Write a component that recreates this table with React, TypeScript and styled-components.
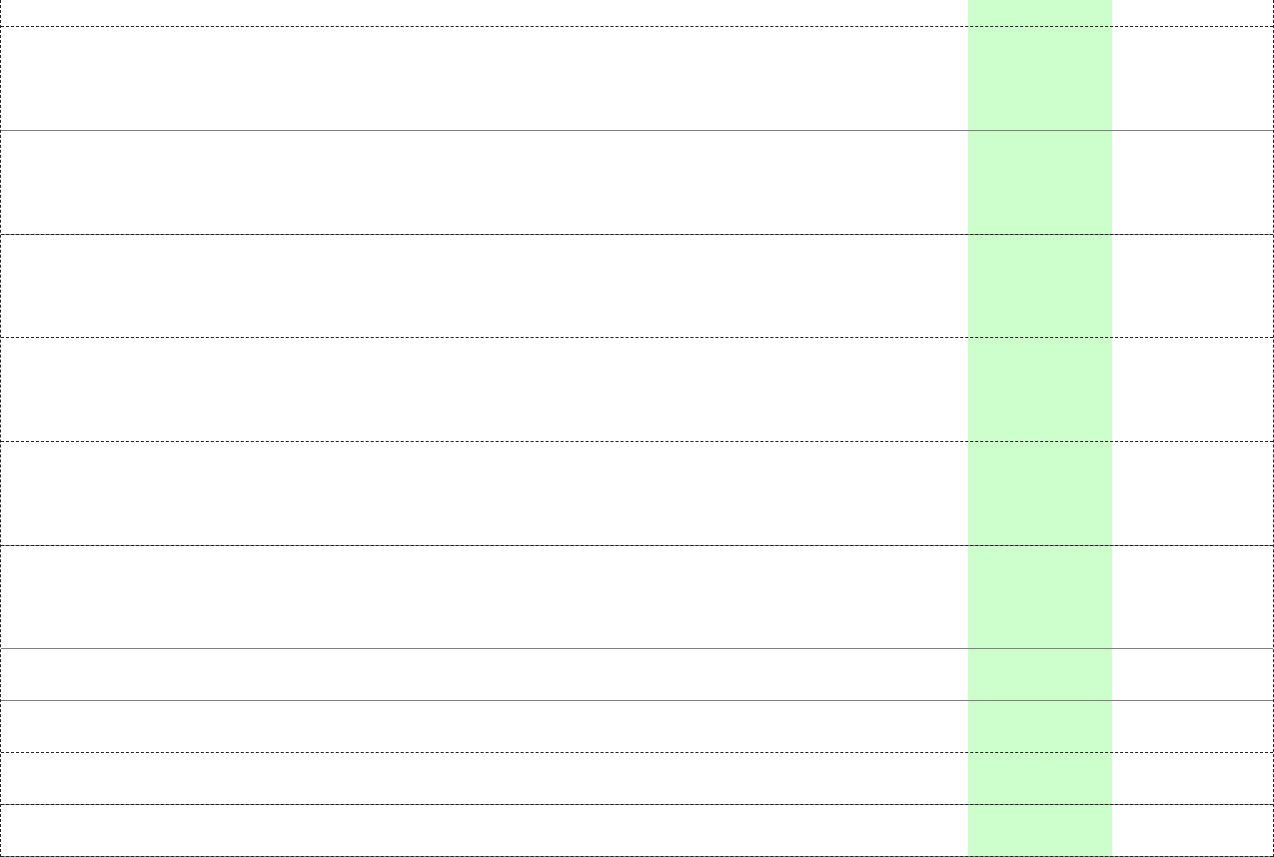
import { Fragment } from "react";
import styled, { createGlobalStyle } from "styled-components";

const GlobalStyle = createGlobalStyle`
  html, body {
    margin: 0;
    padding: 0;
    background: #fff;
    font-family: "Liberation Sans", Arial, sans-serif;
    overflow: hidden;
  }
`;

type RuleKind = "dashed" | "solid" | "both";

const Sheet = styled.div`
  display: flex;
  flex-direction: column;
  width: 1274px;
  height: 857px;
  box-sizing: border-box;
  border-left: 1px dashed #222;
  border-right: 1px dashed #222;
  background: linear-gradient(
    to right,
    transparent 967px,
    #ccffcc 967px,
    #ccffcc 1111px,
    transparent 1111px
  );
`;

const Band = styled.div<{ $h: number }>`
  height: ${(p) => p.$h}px;
  flex: none;
`;

const Rule = styled.div<{ $kind: RuleKind }>`
  flex: none;
  height: ${(p) => (p.$kind === "solid" ? "1px" : "0")};
  background: ${(p) => (p.$kind === "dashed" ? "transparent" : "#808080")};
  border-top: ${(p) => (p.$kind === "solid" ? "none" : "1px dashed #222")};
`;

// band height above each rule, and what the rule looks like
const rows: { h: number; kind: RuleKind }[] = [
  { h: 26, kind: "dashed" },
  { h: 103, kind: "solid" },
  { h: 103, kind: "both" },
  { h: 102, kind: "dashed" },
  { h: 103, kind: "dashed" },
  { h: 103, kind: "both" },
  { h: 102, kind: "solid" },
  { h: 51, kind: "solid" },
  { h: 51, kind: "dashed" },
  { h: 51, kind: "both" },
  { h: 51, kind: "both" },
];

export default function App() {
  return (
    <>
      <GlobalStyle />
      <Sheet>
        {rows.map((r, i) => (
          <Fragment key={i}>
            <Band $h={r.h} />
            <Rule $kind={r.kind} />
          </Fragment>
        ))}
      </Sheet>
    </>
  );
}
